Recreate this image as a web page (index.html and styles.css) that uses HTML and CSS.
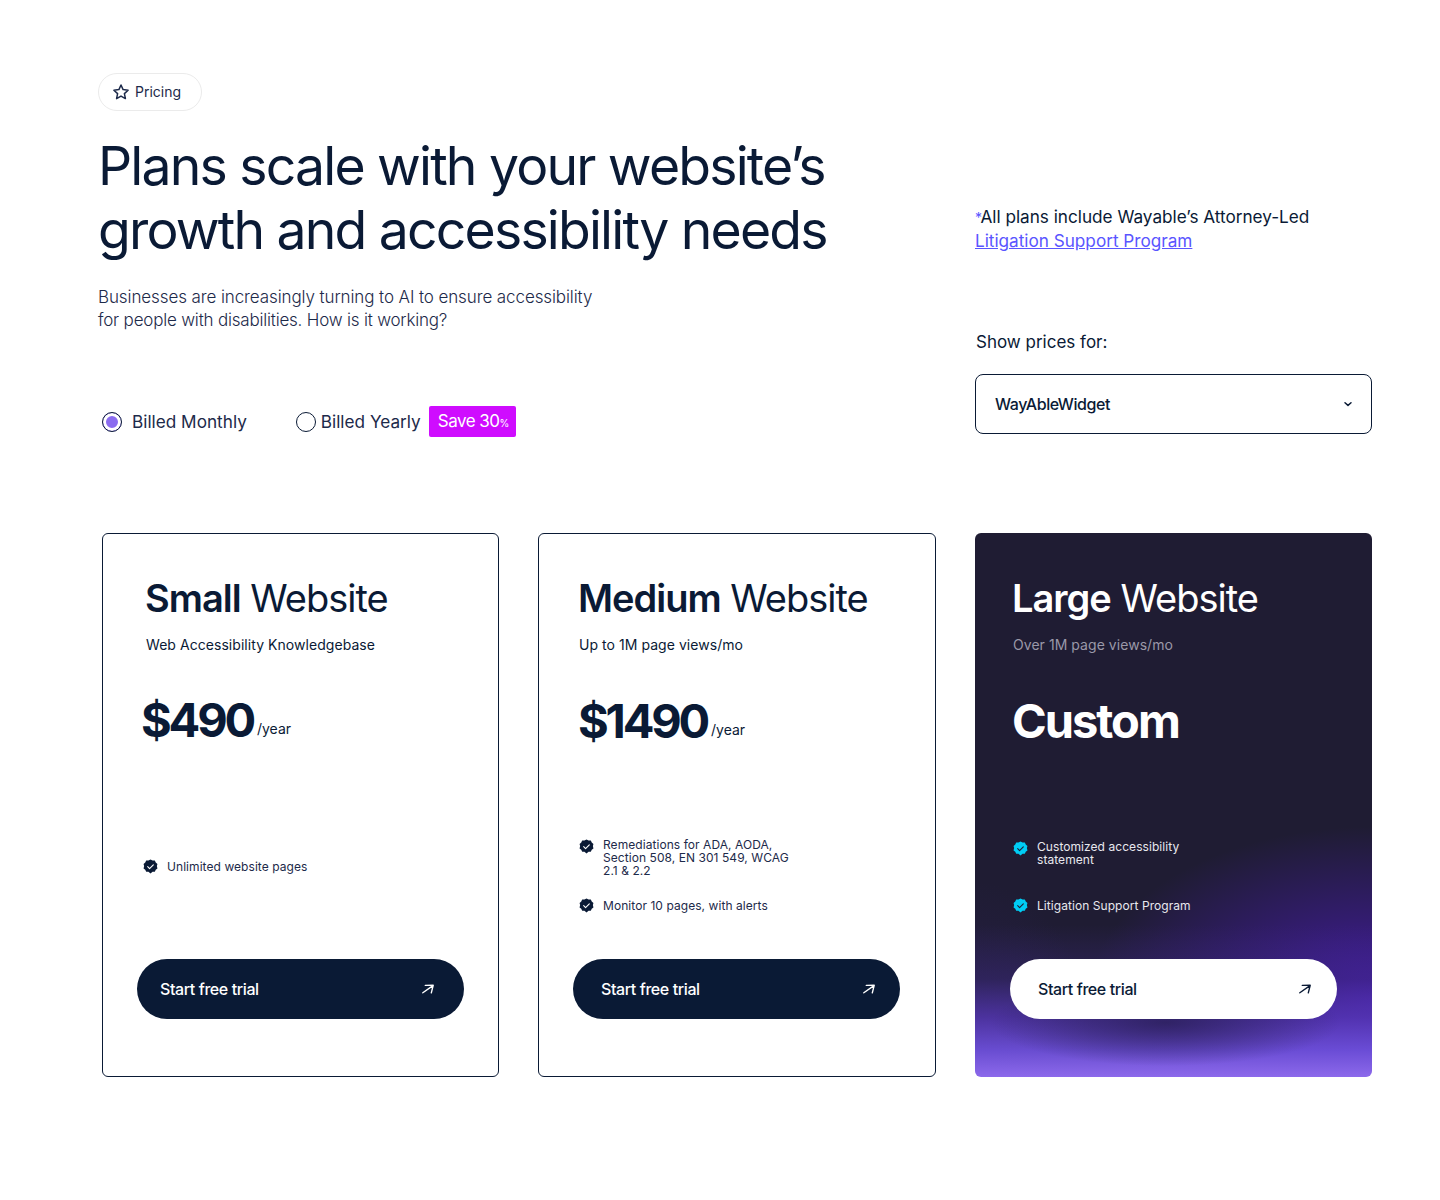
FILE: index.html
```html
<!DOCTYPE html>
<html lang="en">

<head>
    <meta charset="UTF-8">
    <meta name="viewport" content="width=device-width, initial-scale=1.0">
    <title>Pricing</title>
    <link rel="stylesheet" href="styles.css">
</head>

<body>
    <svg class="sprite" width="0" height="0">
        <symbol id="seal" viewBox="0 0 16 16">
            <path class="seal-bg" d="M8 .6l2.200 1 2.400-.1 1 2.100 1.800 1.600-.6 2.300.6 2.500-1.800 1.500-1 2.200-2.400-.1L8 15.400l-2.200-1.800-2.400.1-1-2.200L.6 10l.6-2.500L.6 5.200l1.800-1.600 1-2.100 2.400.1z"/>
            <path class="seal-check" d="M5 8.200l2 2 4-4" fill="none" stroke-width="1.200" stroke-linecap="round" stroke-linejoin="round"/>
        </symbol>
        <symbol id="arrow" viewBox="0 0 14 14">
            <path d="M1.800 10.800L12 3.600M4.300 3.400l7.900-.1-1.900 7.600" fill="none" stroke="currentColor" stroke-width="1.400" stroke-linecap="round" stroke-linejoin="round"/>
        </symbol>
    </svg>

    <main class="page">
        <!-- header -->
        <section class="top">
            <div class="top-left">
                <div class="pill">
                    <svg class="pill-star" viewBox="0 0 18 18" width="18" height="18">
                        <path d="M9 2l2.100 4.600 5 .6-3.700 3.400 1 5L9 13.100l-4.400 2.500 1-5L1.900 7.200l5-.6z" fill="none" stroke="currentColor" stroke-width="1.500" stroke-linejoin="round"/>
                    </svg>
                    Pricing
                </div>
                <h1>Plans scale with your website’s<br>growth and accessibility needs</h1>
                <p class="lead">Businesses are increasingly turning to AI to ensure accessibility<br><span class="lead-tail">for people with disabilities. How is it working?</span></p>
                <div class="billing">
                    <label class="radio-row radio-row-monthly"><span class="radio radio-on"></span>Billed Monthly</label>
                    <label class="radio-row radio-row-yearly"><span class="radio"></span>Billed Yearly</label>
                    <span class="save">Save 30<small>%</small></span>
                </div>
            </div>
            <div class="top-right">
                <p class="note"><span class="star-mark">*</span>All plans include Wayable’s Attorney-Led<br><a href="#">Litigation Support Program</a></p>
                <div class="show-label">Show prices for:</div>
                <div class="select">
                    WayAbleWidget
                    <svg viewBox="0 0 10 10" width="10" height="10">
                        <path d="M2 3.800l3 2.600 3-2.600" fill="none" stroke="currentColor" stroke-width="1.500" stroke-linecap="round" stroke-linejoin="round"/>
                    </svg>
                </div>
            </div>
        </section>

        <!-- plans -->
        <section class="cards">
            <article class="card card-small">
                <div class="card-head">
                    <h2><b>Small</b> Website</h2>
                    <p class="sub">Web Accessibility Knowledgebase</p>
                    <div class="price">$490<span>/year</span></div>
                </div>
                <ul class="features">
                    <li><svg class="seal"><use href="#seal"/></svg>Unlimited website pages</li>
                </ul>
                <a class="btn" href="#">Start free trial<svg class="arrow"><use href="#arrow"/></svg></a>
            </article>

            <article class="card card-medium">
                <div class="card-head">
                    <h2><b>Medium</b> Website</h2>
                    <p class="sub">Up to 1M page views/mo</p>
                    <div class="price">$1490<span>/year</span></div>
                </div>
                <ul class="features">
                    <li class="multi"><svg class="seal"><use href="#seal"/></svg><span>Remediations for ADA, AODA,<br>Section 508, EN 301 549, WCAG<br>2.1 &amp; 2.2</span></li>
                    <li><svg class="seal"><use href="#seal"/></svg>Monitor 10 pages, with alerts</li>
                </ul>
                <a class="btn" href="#">Start free trial<svg class="arrow"><use href="#arrow"/></svg></a>
            </article>

            <article class="card card-large">
                <div class="card-head">
                    <h2><b>Large</b> Website</h2>
                    <p class="sub">Over 1M page views/mo</p>
                    <div class="price price-word">Custom</div>
                </div>
                <ul class="features">
                    <li class="multi"><svg class="seal"><use href="#seal"/></svg><span>Customized accessibility<br>statement</span></li>
                    <li><svg class="seal"><use href="#seal"/></svg>Litigation Support Program</li>
                </ul>
                <a class="btn" href="#">Start free trial<svg class="arrow"><use href="#arrow"/></svg></a>
            </article>
        </section>
    </main>
</body>

</html>
```

FILE: styles.css
```css
/* base */
body {
    margin: 0;
    background: #fff;
    color: #0a1a35;
    font-family: Inter, "Noto Sans", sans-serif;
}

.sprite {
    display: block;
}

.page {
    padding: 73px 68px 0 98px;
}

/* header */
.top {
    display: flex;
    justify-content: space-between;
}

.top-left {
    width: 780px;
}

.pill {
    display: inline-flex;
    align-items: center;
    gap: 5px;
    box-sizing: border-box;
    width: 104px;
    height: 38px;
    padding: 0 0 1px 13px;
    border: 1px solid #ebebeb;
    border-radius: 19px;
    font-size: 14px;
    color: #1d2a4a;
}

h1 {
    margin: 23px 0 0;
    width: 780px;
    font-size: 53.5px;
    font-weight: 400;
    line-height: 63.5px;
    letter-spacing: -1.8px;
    white-space: nowrap;
}

.lead {
    margin: 25px 0 0;
    font-size: 17px;
    font-weight: 300;
    line-height: 23px;
    letter-spacing: -0.1px;
    color: #1d2a4a;
}

.lead-tail {
    letter-spacing: -0.2px;
}

.billing {
    display: flex;
    align-items: center;
    margin: 74px 0 0 4px;
    font-size: 17.2px;
    color: #1d2a4a;
}

.radio-row {
    display: flex;
    align-items: center;
}

.radio-row-monthly {
    gap: 10px;
    margin-right: 49px;
}

.radio-row-yearly {
    gap: 5px;
    margin-right: 8px;
}

.radio {
    box-sizing: border-box;
    width: 20px;
    height: 20px;
    border: 1.5px solid #0a1a35;
    border-radius: 50%;
}

.radio-on {
    background: #8b6cf0;
    box-shadow: inset 0 0 0 3px #fff;
}

.save {
    padding: 0 7px 0 9px;
    height: 31px;
    line-height: 31px;
    border-radius: 2px;
    background: #cf0cff;
    color: #fff;
    font-size: 17px;
    letter-spacing: -0.5px;
}

.save small {
    font-size: 10px;
}

.top-right {
    box-sizing: border-box;
    width: 397px;
    padding-top: 133px;
}

.note {
    margin: 0;
    font-size: 17.2px;
    line-height: 22.5px;
    letter-spacing: -0.02px;
}

.star-mark,
.note a {
    color: #5a55ff;
}

.star-mark {
    font-size: 14px;
    letter-spacing: -1.5px;
}

.show-label {
    margin: 78px 0 0 1px;
    font-size: 17px;
    line-height: 24px;
}

.select {
    display: flex;
    align-items: center;
    justify-content: space-between;
    box-sizing: border-box;
    height: 60px;
    margin-top: 20px;
    padding: 0 18px 0 19px;
    border: 1px solid #0a1a35;
    border-radius: 8px;
    font-size: 16px;
    font-weight: 500;
    letter-spacing: -0.45px;
}

/* cards */
.cards {
    display: grid;
    grid-template-columns: 397px 398px 397px;
    gap: 39px;
    margin: 96px 0 0 4px;
}

.card {
    display: flex;
    flex-direction: column;
    box-sizing: border-box;
    height: 544px;
    padding: 0 34px;
    border: 1px solid #0a1a35;
    border-radius: 6px;
}

.card-head {
    height: 270px;
    padding-top: 42px;
    box-sizing: border-box;
}

.card-small .card-head {
    padding-left: 9px;
}

.card-medium .card-head {
    padding-left: 6px;
}

.card-large .card-head {
    padding-left: 3px;
}

h2 {
    margin: 0 0 0 -1px;
    font-size: 38px;
    font-weight: 400;
    line-height: 44px;
    letter-spacing: -1px;
}

h2 b {
    font-weight: 600;
}

.sub {
    margin: 15px 0 0;
    font-size: 14px;
    line-height: 20px;
    letter-spacing: 0.05px;
}

.price {
    margin: 35px 0 0 -1px;
    font-size: 47px;
    font-weight: 700;
    line-height: 62px;
    letter-spacing: -3.2px;
    white-space: nowrap;
}

.card-small .price {
    margin: 34px 0 0 -5px;
}

.price-word {
    letter-spacing: -2px;
}

.price span {
    margin-left: 4px;
    font-size: 14px;
    font-weight: 400;
    letter-spacing: 0;
    vertical-align: 3px;
}

.features {
    flex: 1;
    display: flex;
    flex-direction: column;
    gap: 21px;
    margin: 0;
    padding: 34px 0 0 6px;
    list-style: none;
    font-size: 12px;
    line-height: 13px;
    letter-spacing: 0.06px;
    color: #1d2a4a;
}

.card-small .features {
    padding-top: 55px;
}

.features li {
    display: flex;
    align-items: center;
    gap: 9px;
}

.features li.multi {
    align-items: flex-start;
}

.multi .seal {
    margin-top: 1px;
}

.seal {
    --seal-bg: #0a1a35;
    --seal-check: #fff;
    flex: none;
    width: 15px;
    height: 15px;
}

.seal-bg {
    fill: var(--seal-bg);
}

.seal-check {
    stroke: var(--seal-check);
}

.btn {
    display: flex;
    align-items: center;
    justify-content: space-between;
    box-sizing: border-box;
    height: 60px;
    margin-bottom: 57px;
    padding: 0 29px 0 23px;
    border-radius: 30px;
    background: #0a1a35;
    color: #fff;
    font-size: 16px;
    font-weight: 500;
    letter-spacing: -0.4px;
    text-decoration: none;
}

.arrow {
    width: 14px;
    height: 14px;
}

.card-medium .btn {
    margin-right: 1px;
    padding-left: 28px;
    padding-right: 24px;
}

/* dark card */
.card-large {
    border: 0;
    padding: 0 35px;
    color: #fff;
    background:
        radial-gradient(ellipse 44% 8% at 48% 90%, rgba(40, 30, 85, .8), rgba(40, 30, 85, 0)),
        linear-gradient(to top, #8c69eb 0, rgba(110, 80, 220, .92) 5%, rgba(85, 55, 180, .8) 11%, rgba(60, 42, 125, .45) 18%, rgba(31, 28, 51, 0) 28%),
        radial-gradient(ellipse 72% 32% at 100% 86%, rgba(72, 28, 175, 1), rgba(72, 28, 175, .5) 45%, rgba(72, 28, 175, 0)),
        radial-gradient(ellipse 30% 32% at 0 96%, rgba(60, 40, 130, .3), rgba(60, 40, 130, 0)),
        #1f1c33;
}

.card-large .card-head {
    padding-top: 43px;
}

.card-large .sub {
    color: #9a98a8;
}

.card-large .features {
    padding: 37px 0 0 3px;
    gap: 32px;
    color: #e8e8ee;
}

.card-large .seal {
    --seal-bg: #00cdf5;
    --seal-check: #1f1c33;
}

.card-large .btn {
    margin-bottom: 58px;
    padding: 0 25px 0 28px;
    background: #fff;
    color: #0a1a35;
}
```
